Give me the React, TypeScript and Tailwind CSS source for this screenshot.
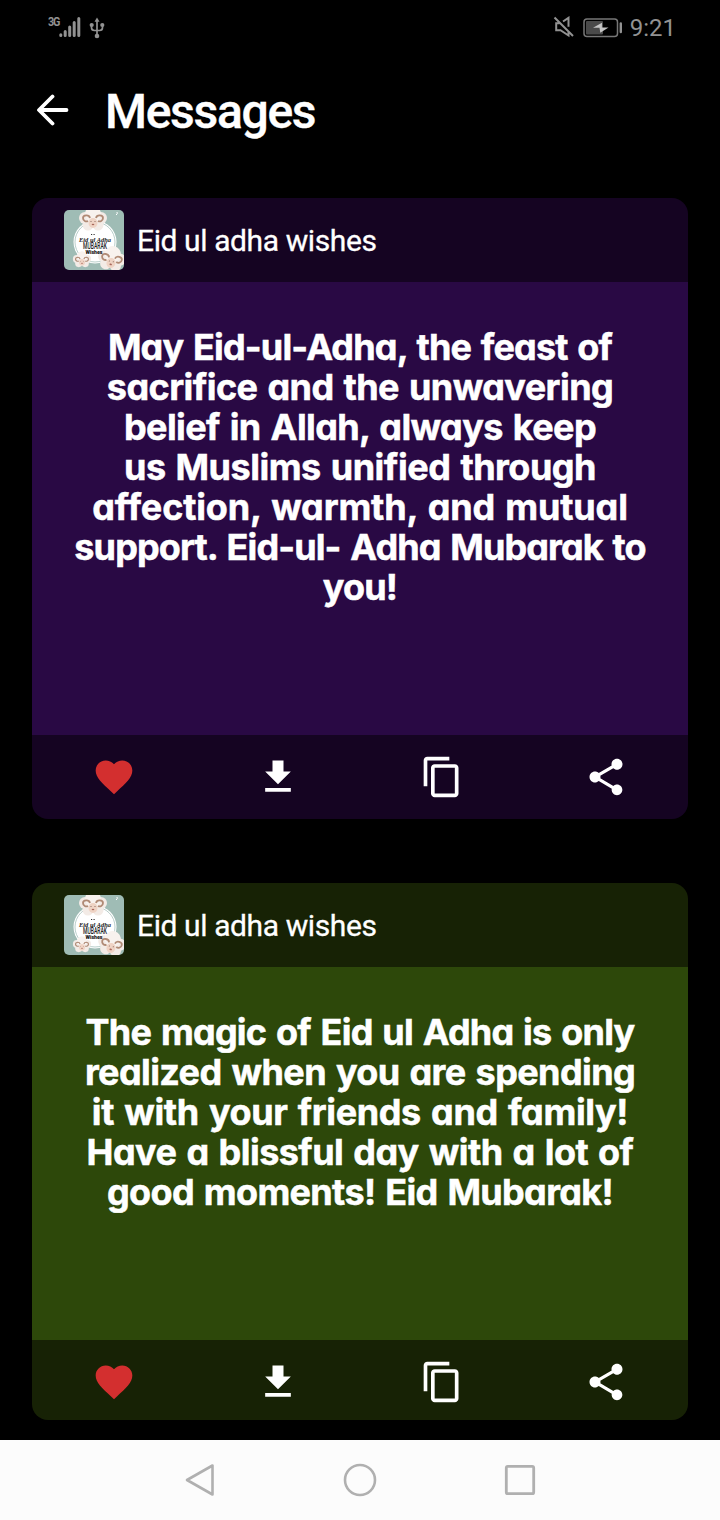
import { MdContentCopy, MdFavorite, MdFileDownload, MdShare } from "react-icons/md";

type Line = { text: string; spacing: string };

type Message = {
    id: number;
    body: string;
    bar: string;
    height: string;
    footer: string;
    lines: Line[];
};

const messages: Message[] = [
    {
        id: 1,
        body: "bg-[#290944]",
        bar: "bg-[#150422]",
        height: "h-[453px]",
        footer: "h-[84px]",
        lines: [
            { text: "May Eid-ul-Adha, the feast of", spacing: "tracking-[-0.83px]" },
            { text: "sacrifice and the unwavering", spacing: "tracking-[-0.56px]" },
            { text: "belief in Allah, always keep", spacing: "tracking-[-0.6px]" },
            { text: "us Muslims unified through", spacing: "tracking-[-0.5px]" },
            { text: "affection, warmth, and mutual", spacing: "tracking-[-0.15px]" },
            { text: "support. Eid-ul- Adha Mubarak to", spacing: "tracking-[-0.87px]" },
            { text: "you!", spacing: "tracking-[-0.8px]" },
        ],
    },
    {
        id: 2,
        body: "bg-[#2d480a]",
        bar: "bg-[#172205]",
        height: "h-[373px]",
        footer: "h-[80px]",
        lines: [
            { text: "The magic of Eid ul Adha is only", spacing: "tracking-[-0.78px]" },
            { text: "realized when you are spending", spacing: "tracking-[-0.6px]" },
            { text: "it with your friends and family!", spacing: "tracking-[-0.37px]" },
            { text: "Have a blissful day with a lot of", spacing: "tracking-[-0.54px]" },
            { text: "good moments! Eid Mubarak!", spacing: "tracking-[-0.66px]" },
        ],
    },
];

function Sheep() {
    return (
        <g>
            <circle cx="-8" cy="0" r="6" fill="#f3ebe6" />
            <circle cx="8" cy="0" r="6" fill="#f3ebe6" />
            <circle cx="-5" cy="7" r="5.5" fill="#f3ebe6" />
            <circle cx="5" cy="7" r="5.5" fill="#f3ebe6" />
            <circle cx="0" cy="-4" r="8" fill="#f8f2ee" />
            <ellipse cx="0" cy="5" rx="4.5" ry="5" fill="#efd3c4" />
            <path d="M-3 0c-1-4-7-3-7 0 0 3 3 4 5 3M3 0c1-4 7-3 7 0 0 3-3 4-5 3" fill="none" stroke="#b08a75" strokeWidth="1.8" />
            <circle cx="-2" cy="3.5" r=".5" fill="#6d5045" />
            <circle cx="2" cy="3.5" r=".5" fill="#6d5045" />
            <ellipse cx="0" cy="6.5" rx="1.3" ry=".8" fill="#a8685c" />
        </g>
    );
}

function Avatar() {
    return (
        <svg width="60" height="60" viewBox="0 0 60 60" className="rounded-[5px] shrink-0">
            <rect width="60" height="60" fill="#9fbcb5" />
            <circle cx="31" cy="32" r="21.5" fill="#fff" />
            <circle cx="31" cy="32" r="20" fill="none" stroke="#a7c1bd" strokeWidth=".8" />
            <g transform="translate(29 8)"><Sheep /></g>
            <g transform="translate(18 49) scale(.65)"><Sheep /></g>
            <g transform="translate(48 48) rotate(12)"><Sheep /></g>
            <path d="M52 5q2-1 1-3" fill="none" stroke="#fff" />
            <path d="M27 24.5h1.2M29.5 24.5h1.2" stroke="#333" strokeWidth="1" />
            <text x="31" y="31.5" fontSize="7" fontFamily="Liberation Serif, serif" fontStyle="italic" fontWeight="bold" fill="#222" textAnchor="middle" textLength="32" lengthAdjust="spacingAndGlyphs">Eid ul Adha</text>
            <text x="31" y="38.5" fontSize="8.5" fontFamily="Roboto, sans-serif" fontWeight="500" fill="#222" textAnchor="middle" textLength="24" lengthAdjust="spacingAndGlyphs">MUBARAK</text>
            <text x="30" y="43.7" fontSize="4.8" fontFamily="Roboto, sans-serif" fontWeight="900" fill="#111" textAnchor="middle" textLength="17" lengthAdjust="spacingAndGlyphs">Wishes</text>
        </svg>
    );
}

function StatusBar() {
    return (
        <div className="h-14 pl-12 pr-[44px] flex items-center justify-between text-[#929292]">
            <div className="flex items-center">
                <span className="w-[11px] text-[12px] leading-none font-bold -mt-3 tracking-[-1.2px] origin-left scale-x-90 scale-y-110">3G</span>
                <svg width="22" height="22" viewBox="0 0 22 22" fill="none" stroke="currentColor" strokeWidth="3" strokeLinecap="round" className="-mt-0.5">
                    <path d="M1.8 18.8v.6M6.2 15.5v4M10.7 11v8.5M15.2 6.5v13M19.8 2.5v17" />
                </svg>
                <svg width="16" height="22" viewBox="0 0 16 22" fill="none" stroke="currentColor" strokeWidth="1.7" className="ml-2">
                    <path d="M8 3v16M2.5 8v2.5q0 3 3 3h5q3 0 3-3V8" />
                    <path d="M8 .5l2.5 4.3H5.5z" fill="currentColor" stroke="none" />
                    <circle cx="2.7" cy="8" r="2.1" fill="currentColor" stroke="none" />
                    <circle cx="13.3" cy="8" r="2.1" fill="currentColor" stroke="none" />
                    <circle cx="8" cy="19" r="2.3" fill="currentColor" stroke="none" />
                </svg>
            </div>
            <div className="flex items-center">
                <svg width="22" height="22" viewBox="0 0 22 22" fill="none" stroke="currentColor" strokeWidth="2" className="mr-2 -mt-0.5">
                    <path d="M1.5 1.5l18.5 18.5M6.5 7.2H3.2v7h4.3l8 5.3v-4M10 5.5L15.5 1.8v9" />
                </svg>
                <svg width="40" height="20" viewBox="0 0 40 20" fill="none">
                    <rect x="1" y="1" width="33.5" height="17.5" rx="3" stroke="#777" strokeWidth="1.5" />
                    <rect x="3" y="3" width="17" height="13.5" rx="1" fill="#4a4a4a" />
                    <path d="M19 4.8L10 9.8h6.5l.8 5L25.5 9.6h-6.6z" fill="#c4c4c4" />
                    <path d="M37.8 5.5v8.5" stroke="#929292" strokeWidth="2.4" strokeLinecap="round" />
                </svg>
                <span className="ml-[7px] text-[24px] leading-none">9:21</span>
            </div>
        </div>
    );
}

function Card({ message }: { message: Message }) {
    return (
        <article className="rounded-2xl overflow-hidden">
            <header className={`h-[84px] px-8 flex items-center gap-[13px] ${message.bar}`}>
                <Avatar />
                <h2 className="text-[30px] leading-9 tracking-[-0.4px] pt-px [-webkit-text-stroke:0.3px_white]">Eid ul adha wishes</h2>
            </header>
            <div className={`${message.height} ${message.body} pt-[45px] text-center text-[36px] leading-[40px] font-bold font-[Inter,sans-serif] [word-spacing:2px] [font-feature-settings:'cv11'] [-webkit-text-stroke:0.5px_white]`}>
                {message.lines.map((line) => (
                    <p key={line.text} className={`whitespace-nowrap ${line.spacing}`}>{line.text}</p>
                ))}
            </div>
            <footer className={`${message.footer} ${message.bar} pt-5 grid grid-cols-4 items-start justify-items-center`}>
                <MdFavorite size={44} className="text-[#d32f2f]" />
                <MdFileDownload size={44} />
                <MdContentCopy size={44} />
                <MdShare size={44} />
            </footer>
        </article>
    );
}

export default function App() {
    return (
        <div className="w-[720px] h-[1520px] flex flex-col bg-black text-white font-[Roboto,sans-serif] overflow-hidden">
            <StatusBar />

            {/* Title */}
            <div className="h-[110px] px-9 flex items-center gap-9">
                <svg width="33" height="34" viewBox="0 0 33 34" fill="none" stroke="currentColor" strokeWidth="3.8" strokeLinecap="round" strokeLinejoin="round">
                    <path d="M16.5 2.5L3 16 16.5 29.5M3.5 16H30.5" />
                </svg>
                <h1 className="pt-0.5 text-[48px] leading-none font-medium tracking-[-1.3px] [-webkit-text-stroke:0.4px_white]">Messages</h1>
            </div>

            <main className="flex-1 px-8 pt-8 flex flex-col gap-16">
                {messages.map((message) => (
                    <Card key={message.id} message={message} />
                ))}
            </main>

            {/* System navigation */}
            <nav className="h-20 shrink-0 bg-[#fcfcfc] flex items-center justify-center gap-[120px]">
                <svg width="40" height="40" viewBox="0 0 40 40" fill="none" stroke="#b0b0b0" strokeWidth="2.6" strokeLinejoin="round">
                    <path d="M32.5 5.5v29L7 20z" />
                </svg>
                <svg width="40" height="40" viewBox="0 0 40 40" fill="none" stroke="#b0b0b0" strokeWidth="2.6">
                    <circle cx="20" cy="20" r="15" />
                </svg>
                <svg width="40" height="40" viewBox="0 0 40 40" fill="none" stroke="#b0b0b0" strokeWidth="2.8">
                    <rect x="6.3" y="6.3" width="27.4" height="27.4" rx="1.5" />
                </svg>
            </nav>
        </div>
    );
}
